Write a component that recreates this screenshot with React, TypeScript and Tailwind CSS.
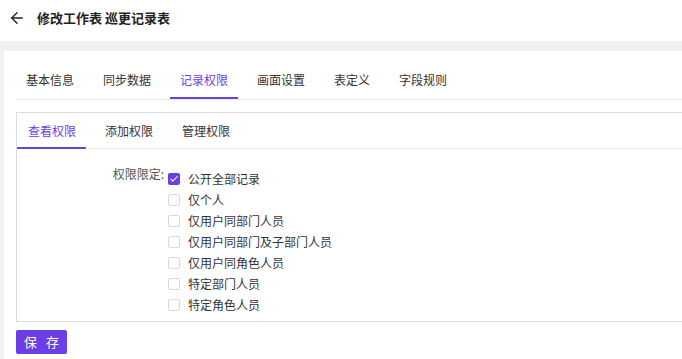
import React from "react";
import { ArrowLeft, Check } from "lucide-react";

const FONT = { fontFamily: '"Noto Sans CJK SC", "Noto Sans", sans-serif' };

const mainTabs = ["基本信息", "同步数据", "记录权限", "画面设置", "表定义", "字段规则"];
const subTabs = ["查看权限", "添加权限", "管理权限"];
const options = [
  "公开全部记录",
  "仅个人",
  "仅用户同部门人员",
  "仅用户同部门及子部门人员",
  "仅用户同角色人员",
  "特定部门人员",
  "特定角色人员",
];

export default function App() {
  return (
    <div className="w-[682px] h-[359px] overflow-hidden bg-[#f0f1f5] text-[#333]" style={FONT}>
      <div className="h-[41px] bg-white flex items-start pt-[9px]">
        <ArrowLeft size={18} strokeWidth={1.8} className="ml-[8px] text-[#222]" />
        <span className="ml-[11px] text-[13px] leading-[18px] font-semibold text-[#222]">修改工作表 巡更记录表</span>
      </div>
      <div className="pl-1 pt-[10px]">
        <div className="w-[700px] bg-white px-3 pt-[19px] pb-4">
          <div className="flex gap-[9px] border-b border-[#ebebeb]">
            {mainTabs.map((t, i) => (
              <div
                key={t}
                className={
                  "px-[10px] text-[12px] leading-5 pb-[7px] border-b-2 " +
                  (i === 2 ? "border-[#6b3fe6] text-[#6b3fe6]" : "border-transparent text-[#333]")
                }
              >
                {t}
              </div>
            ))}
          </div>
          <div className="mt-[12px] border border-[#dcdcdc]">
            <div className="flex gap-[9px] pl-px border-b border-[#ebebeb]">
              {subTabs.map((t, i) => (
                <div
                  key={t}
                  className={
                    "-mb-px px-[10px] pt-[8px] pb-[6px] text-[12px] leading-5 border-b-2 " +
                    (i === 0 ? "border-[#6b3fe6] text-[#6b3fe6] -ml-px pl-[11px]" : "border-transparent text-[#333]")
                  }
                >
                  {t}
                </div>
              ))}
            </div>
            <div className="flex pt-[19px] pb-[6px]">
              <div className="w-[147px] text-right text-[12px] leading-5 -mt-1 text-[#555]">权限限定:</div>
              <div className="ml-1 flex flex-col">
                {options.map((o, i) => (
                  <div key={o} className="h-[21px] flex items-center">
                    {i === 0 ? (
                      <span className="w-3 h-3 rounded-[2px] bg-[#6b3fe6] flex items-center justify-center">
                        <Check size={10} strokeWidth={2.5} className="text-white" />
                      </span>
                    ) : (
                      <span className="w-3 h-3 rounded-[2px] border border-[#d9d9d9] bg-white" />
                    )}
                    <span className="ml-2 text-[12px] leading-5 text-[#333]">{o}</span>
                  </div>
                ))}
              </div>
            </div>
          </div>
          <button className="mt-2 w-[51px] h-[24px] rounded-[2px] bg-[#6b3fe6] text-white text-[13px] leading-[24px] tracking-[3px] pl-[3px]">
            保 存
          </button>
        </div>
      </div>
    </div>
  );
}
